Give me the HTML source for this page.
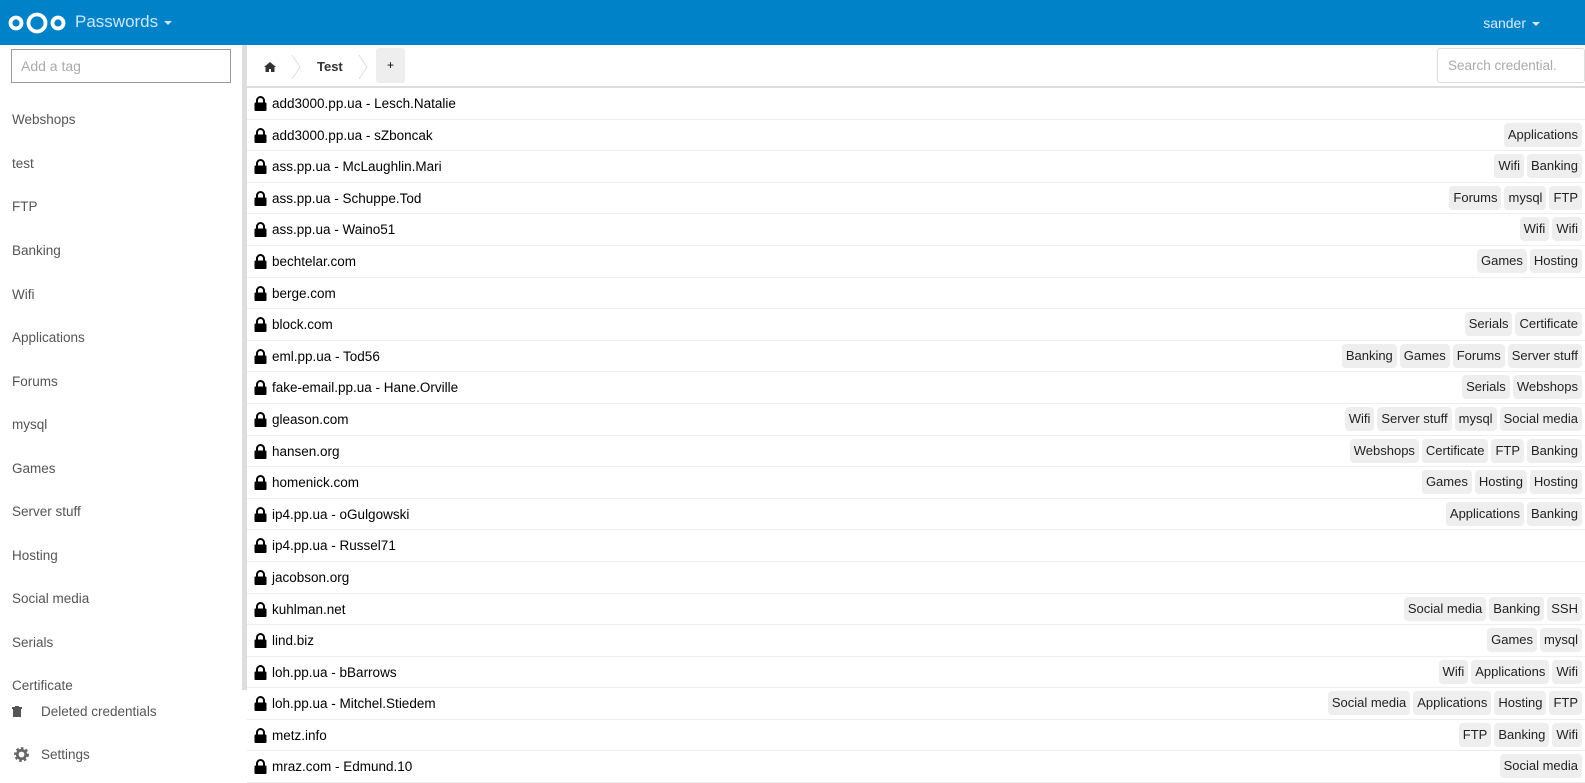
<!DOCTYPE html>
<html><head><meta charset="utf-8"><style>
*{box-sizing:border-box;margin:0;padding:0}
body{width:1585px;height:770px;overflow:hidden;font-family:"Liberation Sans",sans-serif;font-size:13px;color:#000;background:#fff;position:relative}
#hdr{position:absolute;left:0;top:0;width:1585px;height:45px;background:#0082c9;color:#fff}
#hdr .app{position:absolute;left:75px;top:12px;font-size:17px;opacity:.8}
#hdr .user{position:absolute;right:45px;top:15px;font-size:14px;opacity:.85}
.caret{display:inline-block;border-left:4px solid transparent;border-right:4px solid transparent;border-top:4px solid #fff;vertical-align:middle;margin-left:6px}
#side{position:absolute;left:0;top:45px;width:242px;height:725px;overflow:hidden}
#side input{position:absolute;left:11px;top:4px;width:220px;height:34px;border:1px solid #999;font-family:inherit;font-size:14px;padding-left:9px;color:#aaa}
#side .tag{position:absolute;left:12px;font-size:13.5px;color:#555}
#sb{position:absolute;left:242px;top:45px;width:5px;height:645px;background:#ddd}
#bottom{position:absolute;left:0;top:690px;width:242px;height:80px;background:#fff}
#main{position:absolute;left:247px;top:45px;width:1338px}
#crumb{height:43px;border-bottom:2px solid #ddd;position:relative}
.plus{position:absolute;left:129px;top:3px;width:29px;height:35px;background:#eee;border-radius:3px;text-align:center;line-height:35px;font-size:12px}
#search{position:absolute;right:0;top:3px;width:148px;height:35px;border:1px solid #ddd;border-radius:3px;color:#aaa;font-size:13.5px;line-height:33px;padding-left:10px}
.row{height:31.6px;border-bottom:1px solid #eee;position:relative;line-height:31px;padding-left:25px;font-size:13.5px}
.row svg{position:absolute;left:7px;top:8px}
.tags{position:absolute;right:3px;top:3px;display:flex;gap:3px}
.tags span{background:#eee;border-radius:4px;height:24px;line-height:24px;padding:0 4px;font-size:13px;color:#222}
</style></head><body>
<div id="hdr">
<svg style="position:absolute;left:8px;top:11px" width="58" height="24" viewBox="0 0 58 24"><circle cx="8" cy="12" r="5.5" fill="none" stroke="#fff" stroke-width="3.8"/><circle cx="29" cy="12" r="8.5" fill="none" stroke="#fff" stroke-width="3.8"/><circle cx="50" cy="12" r="5.5" fill="none" stroke="#fff" stroke-width="3.8"/></svg>
<div class="app">Passwords<span class="caret"></span></div>
<div class="user">sander<span class="caret"></span></div>
</div>
<div id="side">
<input value="Add a tag">
<div class="tag" style="top:67px">Webshops</div>
<div class="tag" style="top:111px">test</div>
<div class="tag" style="top:154px">FTP</div>
<div class="tag" style="top:198px">Banking</div>
<div class="tag" style="top:242px">Wifi</div>
<div class="tag" style="top:285px">Applications</div>
<div class="tag" style="top:329px">Forums</div>
<div class="tag" style="top:372px">mysql</div>
<div class="tag" style="top:416px">Games</div>
<div class="tag" style="top:459px">Server stuff</div>
<div class="tag" style="top:503px">Hosting</div>
<div class="tag" style="top:546px">Social media</div>
<div class="tag" style="top:590px">Serials</div>
<div class="tag" style="top:633px">Certificate</div>
</div>
<div id="sb"></div>
<div id="bottom">
<svg style="position:absolute;left:12px;top:16px" width="10" height="11" viewBox="0 0 10 11"><rect x="0" y="1" width="10" height="2" fill="#555"/><rect x="3" y="0" width="4" height="2" fill="#555"/><rect x="1" y="3" width="8" height="8" fill="#555"/></svg>
<div style="position:absolute;left:41px;top:14px;font-size:13.5px;color:#555">Deleted credentials</div>
<svg style="position:absolute;left:13px;top:56px" width="17" height="17" viewBox="0 0 16 16"><circle cx="8" cy="8" r="5.5" fill="none" stroke="#666" stroke-width="3" stroke-dasharray="2.2 2"/><circle cx="8" cy="8" r="4" fill="none" stroke="#666" stroke-width="2.5"/></svg>
<div style="position:absolute;left:41px;top:57px;font-size:13.5px;color:#555">Settings</div>
</div>
<div id="main">
<div id="crumb">
<svg style="position:absolute;left:17px;top:17px" width="12" height="10" viewBox="0 0 12 10"><path d="M6 0L0 5h1.5v5h3.5V7h2v3h3.5V5H12z" fill="#333"/></svg>
<svg style="position:absolute;left:44px;top:9px" width="10" height="26"><path d="M1 1L9 13L1 25" fill="none" stroke="#ddd"/></svg>
<div style="position:absolute;left:70px;top:14px;font-weight:bold;font-size:13px;color:#333">Test</div>
<svg style="position:absolute;left:111px;top:9px" width="10" height="26"><path d="M1 1L9 13L1 25" fill="none" stroke="#ddd"/></svg>
<div class="plus">+</div>
<div id="search">Search credential.</div>
</div>
<div id="rows"></div>
</div>
<script>
var d=[["add3000.pp.ua - Lesch.Natalie",[]],["add3000.pp.ua - sZboncak",["Applications"]],["ass.pp.ua - McLaughlin.Mari",["Wifi","Banking"]],["ass.pp.ua - Schuppe.Tod",["Forums","mysql","FTP"]],["ass.pp.ua - Waino51",["Wifi","Wifi"]],["bechtelar.com",["Games","Hosting"]],["berge.com",[]],["block.com",["Serials","Certificate"]],["eml.pp.ua - Tod56",["Banking","Games","Forums","Server stuff"]],["fake-email.pp.ua - Hane.Orville",["Serials","Webshops"]],["gleason.com",["Wifi","Server stuff","mysql","Social media"]],["hansen.org",["Webshops","Certificate","FTP","Banking"]],["homenick.com",["Games","Hosting","Hosting"]],["ip4.pp.ua - oGulgowski",["Applications","Banking"]],["ip4.pp.ua - Russel71",[]],["jacobson.org",[]],["kuhlman.net",["Social media","Banking","SSH"]],["lind.biz",["Games","mysql"]],["loh.pp.ua - bBarrows",["Wifi","Applications","Wifi"]],["loh.pp.ua - Mitchel.Stiedem",["Social media","Applications","Hosting","FTP"]],["metz.info",["FTP","Banking","Wifi"]],["mraz.com - Edmund.10",["Social media"]]];
var h="";d.forEach(function(r){h+='<div class="row"><svg width="13" height="15" viewBox="0 0 13 15"><path d="M3 7V4.5a3.5 3.5 0 0 1 7 0V7" fill="none" stroke="#000" stroke-width="2"/><rect x="0.5" y="6.5" width="12" height="8.5" rx="1" fill="#000"/></svg>'+r[0]+'<div class="tags">'+r[1].map(function(t){return"<span>"+t+"</span>"}).join("")+'</div></div>'});
document.getElementById("rows").innerHTML=h;
</script>
</body></html>
